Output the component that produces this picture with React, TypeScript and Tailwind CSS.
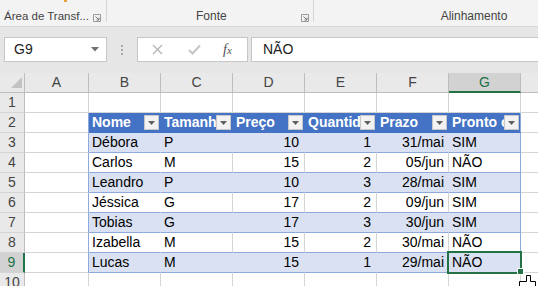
import React from "react"

const rows: [string, string, number, number, string, string][] = [
  ["Débora", "P", 10, 1, "31/mai", "SIM"],
  ["Carlos", "M", 15, 2, "05/jun", "NÃO"],
  ["Leandro", "P", 10, 3, "28/mai", "SIM"],
  ["Jéssica", "G", 17, 2, "09/jun", "SIM"],
  ["Tobias", "G", 17, 3, "30/jun", "SIM"],
  ["Izabella", "M", 15, 2, "30/mai", "NÃO"],
  ["Lucas", "M", 15, 1, "29/mai", "NÃO"],
]

const headers = ["Nome", "Tamanho", "Preço", "Quantidade", "Prazo", "Pronto o"]

function Launcher() {
  return (
    <svg width="8" height="8" viewBox="0 0 8 8" className="shrink-0">
      <path d="M0.5 7.5V0.5H7.5V7.5H0.5" fill="none" stroke="#9a9a9a" strokeWidth="1" />
      <path d="M2.5 2.5L6 6M6 3.5V6H3.5" fill="none" stroke="#7a7a7a" strokeWidth="1" />
    </svg>
  )
}

function Ribbon() {
  return (
    <div className="relative flex h-[27px] border-b border-[#d5d5d5] bg-[#f3f3f3] text-[12px] text-[#444] font-['Liberation_Sans',Arial,sans-serif]">
      {/* bit of an icon peeking from above */}
      <div className="absolute left-[64px] top-0 h-[2px] w-[3px] bg-[#e8a33d]" />
      <div className="flex h-[22px] w-[107px] items-start whitespace-nowrap border-r border-[#d5d5d5] pl-[4px] pt-[9px]">
        <span className="text-[11.5px] leading-[15px]">Área de Transf...</span>
        <span className="ml-auto mr-[5px] mt-[5px]"><Launcher /></span>
      </div>
      <div className="flex h-[22px] w-[207px] items-start border-r border-[#d5d5d5] pt-[9px]">
        <span className="ml-[89px] leading-[15px]">Fonte</span>
        <span className="ml-auto mr-[4px] mt-[5px]"><Launcher /></span>
      </div>
      <div className="flex flex-1 justify-center pl-[96px] pt-[9px]">
        <span className="leading-[15px]">Alinhamento</span>
      </div>
    </div>
  )
}

function FormulaBar() {
  return (
    <div className="flex h-[46px] bg-[#e6e6e6] pt-[10px] font-['Liberation_Sans',Arial,sans-serif]">
      <div className="ml-[4px] flex h-[25px] w-[103px] items-center border border-[#c6c6c6] bg-white pl-[9px] pr-[7px] text-[14px] text-[#222]">
        <span>G9</span>
        <svg width="8" height="5" viewBox="0 0 8 5" className="ml-auto">
          <path d="M0 0H8L4 4.5Z" fill="#707070" />
        </svg>
      </div>
      <div className="flex w-[30px] flex-col items-center gap-[2px] pt-[8px]">
        <div className="h-[2px] w-[2px] bg-[#a8a8a8]" />
        <div className="h-[2px] w-[2px] bg-[#a8a8a8]" />
        <div className="h-[2px] w-[2px] bg-[#a8a8a8]" />
      </div>
      <div className="flex h-[25px] w-[111px] items-center border border-[#c6c6c6] bg-white">
        <svg width="11" height="11" viewBox="0 0 11 11" className="ml-[14px]">
          <path d="M1 1L10 10M10 1L1 10" stroke="#b4b4b4" strokeWidth="1.3" />
        </svg>
        <svg width="13" height="11" viewBox="0 0 13 11" className="ml-[25px]">
          <path d="M1 6L4.5 9.5L12 1.5" fill="none" stroke="#c4c4c4" strokeWidth="2" />
        </svg>
        <span className="ml-[22px] font-['Liberation_Serif',serif] text-[14px] italic text-[#505050]">
          f<span className="text-[11px]">x</span>
        </span>
      </div>
      <div className="ml-[3px] flex h-[25px] flex-1 items-center border border-r-0 border-[#c6c6c6] bg-white pl-[11px] text-[14px] text-[#222]">
        NÃO
      </div>
    </div>
  )
}

function RowHead({ n, sel }: { n: number; sel?: boolean }) {
  return (
    <div
      className={`flex w-[25px] shrink-0 items-center justify-center border-b border-[#d4d4d4] ${
        sel ? "border-r-2 border-r-[#217346] bg-[#d2d2d2] text-[#217346]" : "border-r border-r-[#bdbdbd] bg-[#e9e9e9] text-[#444]"
      }`}
    >
      {n}
    </div>
  )
}

function Dropdown() {
  return (
    <div className="mr-[1px] mt-[2px] flex h-[15px] w-[15px] shrink-0 items-center justify-center border border-[#c8c8c8] bg-[#f2f2f2]">
      <svg width="7" height="4" viewBox="0 0 7 4">
        <path d="M0 0H7L3.5 4Z" fill="#5f5f5f" />
      </svg>
    </div>
  )
}

export default function App() {
  const letters = ["A", "B", "C", "D", "E", "F", "G"]
  return (
    <div className="relative h-[286px] w-[538px] overflow-hidden bg-white font-['Liberation_Sans',Arial,sans-serif]">
      <Ribbon />
      <FormulaBar />

      <div className="text-[14px] leading-[19px]">
        {/* column letters */}
        <div className="flex h-[20px]">
          <div className="relative w-[25px] shrink-0 border-r border-b border-[#bdbdbd] bg-[#e9e9e9]">
            <svg width="11" height="11" viewBox="0 0 11 11" className="absolute right-[2px] bottom-[4px]">
              <path d="M11 0V11H0Z" fill="#c2c2c2" />
            </svg>
          </div>
          {letters.map((l) =>
            l === "G" ? (
              <div key={l} className="flex w-[72px] shrink-0 items-center justify-center border-r border-[#bdbdbd] border-b-2 border-b-[#217346] bg-[#d2d2d2] text-[#217346]">
                {l}
              </div>
            ) : (
              <div
                key={l}
                className={`flex ${l === "A" ? "w-[64px]" : "w-[72px]"} shrink-0 items-center justify-center border-r border-b border-[#bdbdbd] bg-[#e9e9e9] text-[#444]`}
              >
                {l}
              </div>
            )
          )}
          <div className="flex-1 border-b border-[#bdbdbd] bg-[#e9e9e9]" />
        </div>

        {/* row 1 */}
        <div className="flex h-[20px]">
          <RowHead n={1} />
          <div className="w-[64px] shrink-0 border-r border-b border-[#d4d4d4]" />
          {[0, 1, 2, 3, 4, 5].map((i) => (
            <div key={i} className="w-[72px] shrink-0 border-r border-b border-[#d4d4d4]" />
          ))}
          <div className="flex-1 border-b border-[#d4d4d4]" />
        </div>

        {/* row 2: table header */}
        <div className="flex h-[20px]">
          <RowHead n={2} />
          <div className="w-[64px] shrink-0 border-r border-b border-[#d4d4d4] border-r-[#8ea9db]" />
          {headers.map((h, i) => (
            <div
              key={h}
              className={`flex w-[72px] shrink-0 border-r border-b border-[#4472c4] bg-[#4472c4] pl-[3px] font-bold text-white ${
                i === 5 ? "border-r-[#8ea9db]" : ""
              }`}
            >
              <span className="min-w-0 flex-1 overflow-hidden whitespace-nowrap">{h}</span>
              <Dropdown />
            </div>
          ))}
          <div className="flex-1 border-b border-[#d4d4d4]" />
        </div>

        {/* data rows */}
        {rows.map((r, i) => {
          const n = i + 3
          const band = i % 2 === 0
          const bg = band ? "bg-[#d9e1f2]" : "bg-white"
          const inner = band ? "border-r-[#d9e1f2]" : "border-r-[#d4d4d4]"
          return (
            <div key={n} className="flex h-[20px] text-black">
              <RowHead n={n} sel={n === 9} />
              <div className="w-[64px] shrink-0 border-r border-b border-[#d4d4d4] border-r-[#8ea9db]" />
              <div className={`w-[72px] shrink-0 border-r border-b border-[#8ea9db] pl-[3px] ${bg} ${band ? "border-r-[#d9e1f2]" : "border-r-white"}`}>{r[0]}</div>
              <div className={`w-[72px] shrink-0 border-r border-b border-[#8ea9db] pl-[3px] ${bg} ${inner}`}>{r[1]}</div>
              <div className={`w-[72px] shrink-0 border-r border-b border-[#8ea9db] pr-[5px] text-right ${bg} ${inner}`}>{r[2]}</div>
              <div className={`w-[72px] shrink-0 border-r border-b border-[#8ea9db] pr-[5px] text-right ${bg} ${inner}`}>{r[3]}</div>
              <div className={`w-[72px] shrink-0 border-r border-b border-[#8ea9db] pr-[4px] text-right ${bg} ${inner}`}>{r[4]}</div>
              <div className={`relative w-[72px] shrink-0 border-r border-b border-[#8ea9db] pl-[3px] ${bg}`}>
                {r[5]}
                {n === 9 && (
                  <div className="absolute left-[-2px] top-[-2px] z-10 h-[23px] w-[75px] border-2 border-[#217346]">
                    <div className="absolute left-[68px] top-[15px] h-[7px] w-[7px] border border-white bg-[#217346]" />
                  </div>
                )}
              </div>
              <div className="flex-1 border-b border-[#d4d4d4]" />
            </div>
          )
        })}

        {/* row 10 */}
        <div className="flex h-[20px]">
          <RowHead n={10} />
          <div className="w-[64px] shrink-0 border-r border-b border-[#d4d4d4]" />
          {[0, 1, 2, 3, 4, 5].map((i) => (
            <div key={i} className="w-[72px] shrink-0 border-r border-b border-[#d4d4d4]" />
          ))}
          <div className="flex-1 border-b border-[#d4d4d4]" />
        </div>
      </div>

      {/* mouse pointer */}
      <svg width="18" height="14" viewBox="0 0 18 14" className="absolute left-[519px] top-[275px] z-20">
        <path d="M7.5 0.5H11.5V6.5H16.5V13.5H0.5V6.5H7.5Z" fill="white" stroke="black" strokeWidth="1" />
      </svg>
    </div>
  )
}
